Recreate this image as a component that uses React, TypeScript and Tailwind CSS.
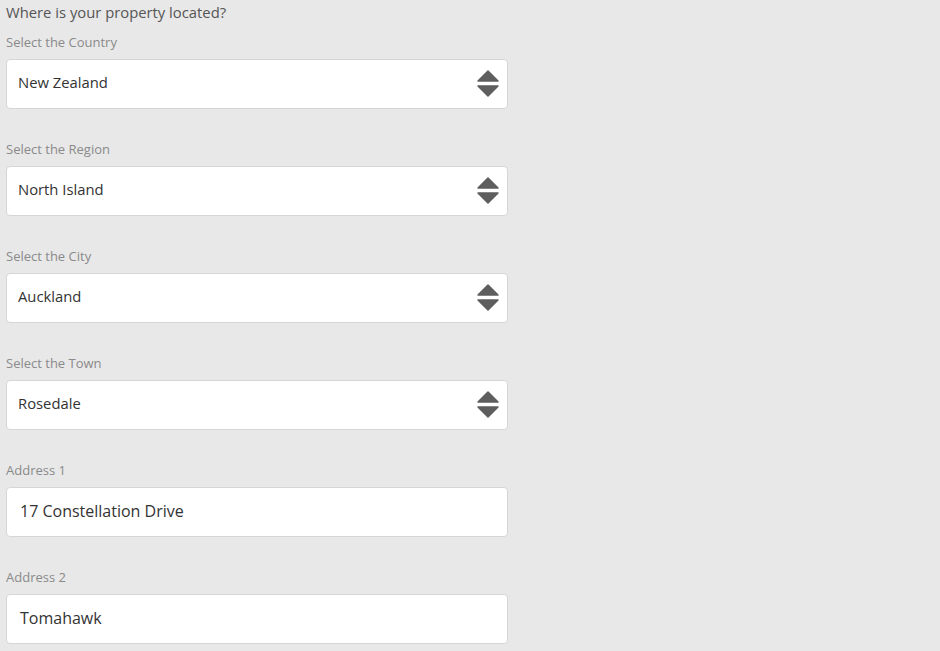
import React from "react";

const SELECTS = [
  { label: "Select the Country", value: "New Zealand" },
  { label: "Select the Region", value: "North Island" },
  { label: "Select the City", value: "Auckland" },
  { label: "Select the Town", value: "Rosedale" },
];

const INPUTS = [
  { label: "Address 1", value: "17 Constellation Drive" },
  { label: "Address 2", value: "Tomahawk" },
];

function Arrows() {
  return (
    <svg width="22" height="28" viewBox="0 0 22 28" className="text-[#5e5e5e]">
      <path d="M11 1 L21 11 L1 11 Z" fill="currentColor" stroke="currentColor" strokeWidth="1.5" strokeLinejoin="round" />
      <path d="M1 16 L21 16 L11 26 Z" fill="currentColor" stroke="currentColor" strokeWidth="1.5" strokeLinejoin="round" />
    </svg>
  );
}

export default function App() {
  return (
    <div className="min-h-screen bg-[#e8e8e8] px-[6px] pt-[3px] font-['Open_Sans',sans-serif]">
      <p className="text-[14.8px] leading-[19px] text-[#555]">Where is your property located?</p>
      <div className="w-[502px]">
        {SELECTS.map((s, i) => (
          <div key={i} className={i === 0 ? "mt-[12px]" : "mt-[32px]"}>
            <label className="block text-[13px] leading-[17px] text-[#8a8a8a]">{s.label}</label>
            <div className="mt-[8px] flex h-[50px] items-center justify-between rounded-[4px] border border-[#d6d6d6] bg-white pl-[11px] pr-[8px]">
              <span className="pb-[3px] text-[14.8px] text-[#333]">{s.value}</span>
              <Arrows />
            </div>
          </div>
        ))}
        {INPUTS.map((s, i) => (
          <div key={i} className="mt-[32px]">
            <label className="block text-[13px] leading-[17px] text-[#8a8a8a]">{s.label}</label>
            <div className="mt-[8px] flex h-[50px] items-center rounded-[4px] border border-[#d6d6d6] bg-white pl-[13px]">
              <span className="pb-[2px] text-[16px] text-[#333]">{s.value}</span>
            </div>
          </div>
        ))}
      </div>
    </div>
  );
}
